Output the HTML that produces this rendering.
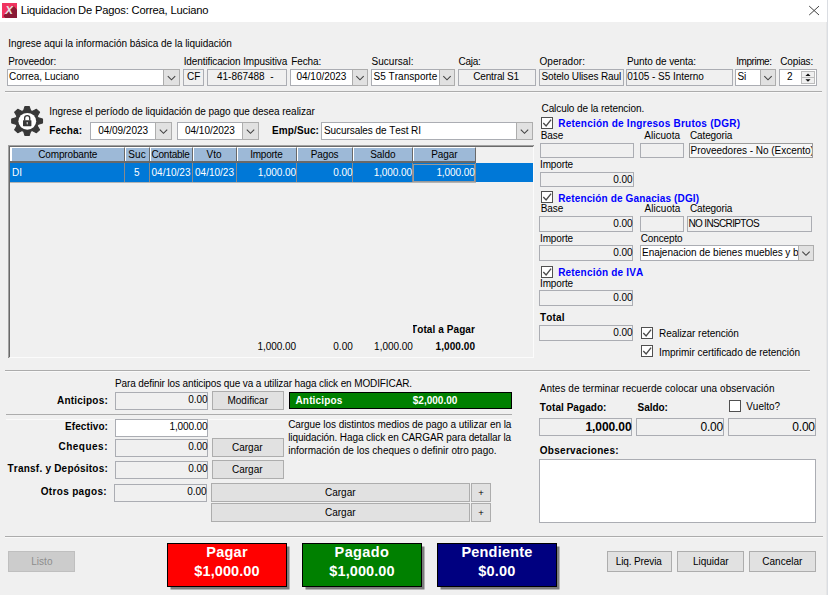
<!DOCTYPE html>
<html lang="es"><head><meta charset="utf-8"><title>Liquidacion De Pagos: Correa, Luciano</title>
<style>
*{box-sizing:border-box;margin:0;padding:0}
html,body{width:828px;height:595px;overflow:hidden;background:#f0f0f0}
body{position:relative;font-family:"Liberation Sans",Arial,sans-serif;font-size:10px;color:#000;line-height:13px;font-kerning:none}
.a{position:absolute;white-space:nowrap}
.t{position:absolute;white-space:nowrap;height:13px;line-height:13px}
.b{font-weight:bold}
.f{position:absolute;border:1px solid #abadb3;background:#f0f0f0}
.w{background:#fff}
.btn{position:absolute;border:1px solid #adadad;background:#e1e1e1}
.dd{position:absolute;border:1px solid #adadad;background:#e1e1e1}
.hl{position:absolute;height:1px;background:#acacac}
.cb{position:absolute;width:12px;height:12px;border:1px solid #505050;background:#fff}
.blue{color:#0000ff;font-weight:bold}
.th{position:absolute;top:0;height:15px;background:#9db9d7;border-right:1px solid #696969;border-left:1px solid #fff;border-top:1px solid #fff}
.vl{position:absolute;top:18px;height:19px;width:1px;background:#8a8a8a}
.big{position:absolute;width:120px;height:44px;border:1px solid #000;box-shadow:3px 3px 0 -0.5px #7d7d7d}
.bt{position:absolute;white-space:nowrap;color:#fff;font-weight:bold;font-size:14.5px;line-height:18px;height:18px}
</style></head>
<body>
<div class="a" style="left:0;top:0;width:828px;height:22px;background:#fff"></div>
<svg class="a" style="left:2px;top:3px" width="15" height="15"><rect width="15" height="15" fill="#f03460"/><polygon points="11.2,2.6 15,6.4 15,15 3.4,15 1.4,13 3,11" fill="#8a1a36"/><text x="7.1" y="11.2" font-family="Liberation Sans" font-weight="bold" font-style="italic" font-size="11.5" fill="#e4e4e4" text-anchor="middle">X</text></svg>
<div class="a" style="left:20.7px;top:3px;font-size:11.2px;line-height:15px;letter-spacing:-0.19px;color:#000">Liquidacion De Pagos: Correa, Luciano</div>
<svg class="a" style="left:808px;top:5px" width="12" height="12"><path d="M1.2 1.1 L11 10 M11 1.1 L1.2 10" stroke="#444" stroke-width="1" fill="none"/></svg>
<div class="a" style="left:826px;top:22px;width:1px;height:573px;background:#e7e7e7"></div>
<div class="a" style="left:827px;top:0;width:1px;height:595px;background:#dadde2"></div>
<div class="t" style="left:8.2px;top:37px;letter-spacing:-0.05px;">Ingrese aqui la información básica de la liquidación</div>
<div class="t" style="left:8.2px;top:55px;letter-spacing:-0.09px;">Proveedor:</div>
<div class="t" style="left:183.7px;top:55px;letter-spacing:-0.11px;">Identificacion Impusitiva</div>
<div class="t" style="left:291.2px;top:55px;letter-spacing:-0.10px;">Fecha:</div>
<div class="t" style="left:371.5px;top:55px;letter-spacing:0.04px;">Sucursal:</div>
<div class="t" style="left:458.5px;top:55px;letter-spacing:-0.27px;">Caja:</div>
<div class="t" style="left:539.5px;top:55px;letter-spacing:0.05px;">Operador:</div>
<div class="t" style="left:627.0px;top:55px;letter-spacing:-0.07px;">Punto de venta:</div>
<div class="t" style="left:736.2px;top:55px;letter-spacing:-0.45px;">Imprime:</div>
<div class="t" style="left:780.3px;top:55px;letter-spacing:-0.17px;">Copias:</div>
<div class="f w" style="left:7px;top:69px;width:173px;height:17px;"></div>
<div class="dd" style="left:163px;top:69px;width:17px;height:17px"><svg width="15" height="15" style="display:block"><path d="M3.8 6.1 l3.7 3.7 l3.7 -3.7" fill="none" stroke="#444" stroke-width="1.1"/></svg></div>
<div class="t" style="left:9.0px;top:70px;letter-spacing:-0.07px;">Correa, Luciano</div>
<div class="f " style="left:183px;top:69px;width:21px;height:17px;"></div>
<div class="t" style="left:187.1px;top:70px;letter-spacing:-0.10px;">CF</div>
<div class="f " style="left:207px;top:69px;width:80px;height:17px;"></div>
<div class="t" style="left:217.0px;top:70px;letter-spacing:-0.02px;">41-867488  -</div>
<div class="f w" style="left:290px;top:69px;width:78px;height:17px;"></div>
<div class="dd" style="left:352px;top:69px;width:16px;height:17px"><svg width="14" height="15" style="display:block"><path d="M3.3 6.1 l3.7 3.7 l3.7 -3.7" fill="none" stroke="#444" stroke-width="1.1"/></svg></div>
<div class="t" style="left:296.5px;top:70px;letter-spacing:-0.02px;">04/10/2023</div>
<div class="f w" style="left:371px;top:69px;width:84px;height:17px;"></div>
<div class="dd" style="left:439px;top:69px;width:16px;height:17px"><svg width="14" height="15" style="display:block"><path d="M3.3 6.1 l3.7 3.7 l3.7 -3.7" fill="none" stroke="#444" stroke-width="1.1"/></svg></div>
<div class="t" style="left:373.5px;top:70px;letter-spacing:0.03px;">S5 Transporte</div>
<div class="f " style="left:458px;top:69px;width:78px;height:17px;"></div>
<div class="t" style="left:473.2px;top:70px;letter-spacing:-0.14px;">Central S1</div>
<div class="f " style="left:539px;top:69px;width:85px;height:17px;"></div>
<div class="t" style="left:541.5px;top:70px;letter-spacing:-0.12px;">Sotelo Ulises Raul</div>
<div class="f " style="left:626px;top:69px;width:107px;height:17px;"></div>
<div class="t" style="left:627.3px;top:70px;letter-spacing:-0.05px;">0105 - S5 Interno</div>
<div class="f w" style="left:735px;top:69px;width:41px;height:17px;"></div>
<div class="dd" style="left:760px;top:69px;width:16px;height:17px"><svg width="14" height="15" style="display:block"><path d="M3.3 6.1 l3.7 3.7 l3.7 -3.7" fill="none" stroke="#444" stroke-width="1.1"/></svg></div>
<div class="t" style="left:737.5px;top:70px;letter-spacing:-0.07px;">Si</div>
<div class="f w" style="left:779px;top:69px;width:38px;height:17px;"></div>
<div class="t" style="left:787.0px;top:70px;letter-spacing:-0.08px;">2</div>
<div class="dd" style="left:801px;top:71px;width:14px;height:13px;background:#f0f0f0;border-color:#bcbcbc"><svg width="12" height="11" style="display:block"><path d="M0 5.5 h12" stroke="#bcbcbc"/><path d="M3.4 4 h5.2 l-2.6 -2.6 z M3.4 7.2 h5.2 l-2.6 2.6 z" fill="#111"/></svg></div>
<div class="hl" style="left:5px;top:91px;width:817px"></div>
<div class="hl" style="left:5px;top:92px;width:817px;background:#f9f9f9"></div>
<svg class="a" style="left:10px;top:104px" width="34" height="34" viewBox="-17.1 -17 34 34"><g transform="scale(1,0.94)"><g fill="#383838" stroke="#383838" stroke-width="1.1" stroke-linejoin="round"><path d="M-3.4 -11.3 L-2.2 -15.4 L2.2 -15.4 L3.4 -11.3 Z" transform="rotate(0)"/><path d="M-3.4 -11.3 L-2.2 -15.4 L2.2 -15.4 L3.4 -11.3 Z" transform="rotate(45)"/><path d="M-3.4 -11.3 L-2.2 -15.4 L2.2 -15.4 L3.4 -11.3 Z" transform="rotate(90)"/><path d="M-3.4 -11.3 L-2.2 -15.4 L2.2 -15.4 L3.4 -11.3 Z" transform="rotate(135)"/><path d="M-3.4 -11.3 L-2.2 -15.4 L2.2 -15.4 L3.4 -11.3 Z" transform="rotate(180)"/><path d="M-3.4 -11.3 L-2.2 -15.4 L2.2 -15.4 L3.4 -11.3 Z" transform="rotate(225)"/><path d="M-3.4 -11.3 L-2.2 -15.4 L2.2 -15.4 L3.4 -11.3 Z" transform="rotate(270)"/><path d="M-3.4 -11.3 L-2.2 -15.4 L2.2 -15.4 L3.4 -11.3 Z" transform="rotate(315)"/><circle r="11.4"/></g><circle r="8.9" cx="0.2" cy="0.3" fill="#fff"/><rect x="-4.1" y="-0.9" width="8.4" height="6.5" rx="0.5" fill="#383838"/><path d="M-2.45 -0.6 v-2.6 a2.55 2.55 0 0 1 5.1 0 v2.6" fill="none" stroke="#383838" stroke-width="1.35"/><rect x="-0.35" y="1.1" width="0.9" height="2.6" rx="0.4" fill="#fff"/></g></svg>
<div class="t" style="left:49.2px;top:105px;letter-spacing:-0.05px;">Ingrese el período de liquidación de pago que desea realizar</div>
<div class="t b" style="left:49.2px;top:124px;letter-spacing:0.13px;">Fecha:</div>
<div class="f w" style="left:90px;top:122px;width:82px;height:18px;"></div>
<div class="dd" style="left:155px;top:122px;width:17px;height:18px"><svg width="15" height="16" style="display:block"><path d="M3.8 6.6 l3.7 3.7 l3.7 -3.7" fill="none" stroke="#444" stroke-width="1.1"/></svg></div>
<div class="t" style="left:98.2px;top:124px;letter-spacing:-0.02px;">04/09/2023</div>
<div class="f w" style="left:177px;top:122px;width:82px;height:18px;"></div>
<div class="dd" style="left:242px;top:122px;width:17px;height:18px"><svg width="15" height="16" style="display:block"><path d="M3.8 6.6 l3.7 3.7 l3.7 -3.7" fill="none" stroke="#444" stroke-width="1.1"/></svg></div>
<div class="t" style="left:185.0px;top:124px;letter-spacing:-0.02px;">04/10/2023</div>
<div class="t b" style="left:272.0px;top:124px;letter-spacing:0.11px;">Emp/Suc:</div>
<div class="f w" style="left:321px;top:122px;width:212px;height:18px;"></div>
<div class="dd" style="left:516px;top:122px;width:17px;height:18px"><svg width="15" height="16" style="display:block"><path d="M3.8 6.6 l3.7 3.7 l3.7 -3.7" fill="none" stroke="#444" stroke-width="1.1"/></svg></div>
<div class="t" style="left:324.0px;top:124px;letter-spacing:-0.07px;">Sucursales de Test RI</div>
<div class="a" style="left:8px;top:145px;width:526px;height:213px;border-top:2px solid #6a6a6a;border-left:2px solid #696969;border-right:1px solid #fbfbfb;border-bottom:1px solid #fbfbfb">
<div class="a" style="left:-2px;top:-2px;width:525px;height:1px;background:#a2a2a2"></div>
<div class="a" style="left:-2px;top:-2px;width:1px;height:212px;background:#a2a2a2"></div>
<div class="th" style="left:0px;width:115px;height:14px;border-left-width:2px"></div>
<div class="th" style="left:115px;width:25px;height:14px"></div>
<div class="th" style="left:140px;width:43px;height:14px"></div>
<div class="th" style="left:183px;width:44px;height:14px"></div>
<div class="th" style="left:227px;width:60px;height:14px"></div>
<div class="th" style="left:287px;width:56px;height:14px"></div>
<div class="th" style="left:343px;width:60px;height:14px"></div>
<div class="th" style="left:403px;width:63px;height:14px"></div>
<div class="a" style="left:0;top:14px;width:466px;height:2px;background:#696969"></div>
<div class="a" style="left:0;top:16px;width:523px;height:19px;background:#0078d7"></div>
<div class="vl" style="left:114px;top:16px"></div>
<div class="vl" style="left:139px;top:16px"></div>
<div class="vl" style="left:182px;top:16px"></div>
<div class="vl" style="left:226px;top:16px"></div>
<div class="vl" style="left:286px;top:16px"></div>
<div class="vl" style="left:342px;top:16px"></div>
<div class="vl" style="left:402px;top:16px"></div>
<div class="vl" style="left:465px;top:16px"></div>
<div class="a" style="left:0;top:35px;width:466px;height:1px;background:#b4b4b4"></div>
<div class="a" style="left:403px;top:17px;width:62px;height:18px;border:1px solid #9a9a9a"></div>
</div>
<div class="t" style="left:38.2px;top:148px;letter-spacing:-0.14px;">Comprobante</div>
<div class="t" style="left:128.2px;top:148px;letter-spacing:0.19px;">Suc</div>
<div class="t" style="left:151.5px;top:148px;letter-spacing:-0.23px;">Contable</div>
<div class="t" style="left:206.5px;top:148px;letter-spacing:0.06px;">Vto</div>
<div class="t" style="left:250.2px;top:148px;letter-spacing:-0.23px;">Importe</div>
<div class="t" style="left:310.7px;top:148px;letter-spacing:-0.11px;">Pagos</div>
<div class="t" style="left:370.2px;top:148px;letter-spacing:-0.06px;">Saldo</div>
<div class="t" style="left:431.2px;top:148px;letter-spacing:-0.08px;">Pagar</div>
<div class="t" style="left:12.0px;top:166px;letter-spacing:-0.08px;color:#fff">DI</div>
<div class="t" style="left:134.0px;top:166px;letter-spacing:-0.08px;color:#fff">5</div>
<div class="t" style="left:151.5px;top:166px;letter-spacing:0.01px;color:#fff">04/10/23</div>
<div class="t" style="left:195.0px;top:166px;letter-spacing:0.01px;color:#fff">04/10/23</div>
<div class="t" style="left:257.7px;top:166px;letter-spacing:-0.08px;color:#fff">1,000.00</div>
<div class="t" style="left:333.2px;top:166px;letter-spacing:-0.04px;color:#fff">0.00</div>
<div class="t" style="left:373.7px;top:166px;letter-spacing:-0.08px;color:#fff">1,000.00</div>
<div class="t" style="left:436.4px;top:166px;letter-spacing:-0.08px;color:#fff">1,000.00</div>
<div class="a" style="left:413px;top:320px;width:64px;height:16px;overflow:hidden">
<div class="t b" style="right:2px;top:3px;letter-spacing:0.09px">Total a Pagar</div></div>
<div class="t" style="left:257.5px;top:340px;letter-spacing:-0.05px;">1,000.00</div>
<div class="t" style="left:333.2px;top:340px;letter-spacing:0.08px;">0.00</div>
<div class="t" style="left:374.1px;top:340px;letter-spacing:-0.02px;">1,000.00</div>
<div class="t b" style="left:435.5px;top:340px;letter-spacing:0.08px;">1,000.00</div>
<div class="t" style="left:541.5px;top:102px;letter-spacing:-0.08px;">Calculo de la retencion.</div>
<div class="cb" style="left:541px;top:117px"><svg width="10" height="10" style="display:block"><path d="M1.3 5 l2.8 2.9 l5 -6.2" fill="none" stroke="#4a4a4a" stroke-width="1.35"/></svg></div>
<div class="t b blue" style="left:558.2px;top:117px;letter-spacing:0.24px;">Retención de Ingresos Brutos (DGR)</div>
<div class="t" style="left:540.7px;top:129px;letter-spacing:-0.09px;">Base</div>
<div class="t" style="left:644.2px;top:129px;letter-spacing:0.05px;">Alicuota</div>
<div class="t" style="left:690.0px;top:129px;letter-spacing:-0.13px;">Categoria</div>
<div class="f " style="left:540px;top:143px;width:94px;height:15px;"></div>
<div class="f " style="left:640px;top:143px;width:44px;height:15px;"></div>
<div class="f " style="left:689px;top:143px;width:124px;height:15px;background:#f7f7f7;border-color:#9c9c9c"></div>
<div class="a" style="left:690px;top:144px;width:122px;height:13px;overflow:hidden">
<div class="t" style="left:0.5px;top:0px;letter-spacing:-0.02px">Proveedores - No (Excento)</div></div>
<div class="t" style="left:540.0px;top:158px;letter-spacing:-0.13px;">Importe</div>
<div class="f " style="left:540px;top:172px;width:94px;height:15px;"></div>
<div class="t" style="left:613.2px;top:173px;letter-spacing:-0.04px;">0.00</div>
<div class="cb" style="left:541px;top:191px"><svg width="10" height="10" style="display:block"><path d="M1.3 5 l2.8 2.9 l5 -6.2" fill="none" stroke="#4a4a4a" stroke-width="1.35"/></svg></div>
<div class="t b blue" style="left:558.2px;top:192px;letter-spacing:0.14px;">Retención de Ganacias (DGI)</div>
<div class="t" style="left:540.7px;top:202px;letter-spacing:-0.09px;">Base</div>
<div class="t" style="left:644.5px;top:202px;letter-spacing:0.05px;">Alicuota</div>
<div class="t" style="left:690.0px;top:202px;letter-spacing:-0.13px;">Categoria</div>
<div class="f " style="left:539px;top:216px;width:94px;height:16px;"></div>
<div class="t" style="left:613.2px;top:217px;letter-spacing:-0.04px;">0.00</div>
<div class="f " style="left:640px;top:216px;width:44px;height:16px;"></div>
<div class="f " style="left:687px;top:216px;width:125px;height:16px;"></div>
<div class="t" style="left:688.5px;top:217px;letter-spacing:-0.65px;">NO INSCRIPTOS</div>
<div class="t" style="left:540.0px;top:232px;letter-spacing:-0.13px;">Importe</div>
<div class="t" style="left:640.7px;top:232px;letter-spacing:-0.13px;">Concepto</div>
<div class="f " style="left:539px;top:245px;width:94px;height:16px;"></div>
<div class="t" style="left:613.2px;top:246px;letter-spacing:-0.04px;">0.00</div>
<div class="f w" style="left:640px;top:245px;width:174px;height:16px;"></div>
<div class="dd" style="left:798px;top:245px;width:16px;height:16px"><svg width="14" height="14" style="display:block"><path d="M3.3 5.6 l3.7 3.7 l3.7 -3.7" fill="none" stroke="#444" stroke-width="1.1"/></svg></div>
<div class="a" style="left:641px;top:246px;width:157px;height:14px;overflow:hidden">
<div class="t" style="left:1px;top:0px;letter-spacing:-0.04px">Enajenacion de bienes muebles y bienes</div></div>
<div class="cb" style="left:541px;top:266px"><svg width="10" height="10" style="display:block"><path d="M1.3 5 l2.8 2.9 l5 -6.2" fill="none" stroke="#4a4a4a" stroke-width="1.35"/></svg></div>
<div class="t b blue" style="left:558.2px;top:266px;letter-spacing:0.19px;">Retención de IVA</div>
<div class="t" style="left:540.0px;top:277px;letter-spacing:-0.13px;">Importe</div>
<div class="f " style="left:539px;top:290px;width:94px;height:16px;"></div>
<div class="t" style="left:613.2px;top:291px;letter-spacing:-0.04px;">0.00</div>
<div class="t b" style="left:540.0px;top:311px;letter-spacing:0.16px;">Total</div>
<div class="f " style="left:539px;top:325px;width:94px;height:16px;"></div>
<div class="t" style="left:613.2px;top:326px;letter-spacing:-0.04px;">0.00</div>
<div class="cb" style="left:641px;top:327px"><svg width="10" height="10" style="display:block"><path d="M1.3 5 l2.8 2.9 l5 -6.2" fill="none" stroke="#4a4a4a" stroke-width="1.35"/></svg></div>
<div class="t" style="left:659.0px;top:327px;letter-spacing:-0.04px;">Realizar retención</div>
<div class="cb" style="left:641px;top:345px"><svg width="10" height="10" style="display:block"><path d="M1.3 5 l2.8 2.9 l5 -6.2" fill="none" stroke="#4a4a4a" stroke-width="1.35"/></svg></div>
<div class="t" style="left:659.0px;top:346px;letter-spacing:-0.04px;">Imprimir certificado de retención</div>
<div class="hl" style="left:5px;top:370px;width:805px"></div>
<div class="hl" style="left:5px;top:371px;width:805px;background:#f9f9f9"></div>
<div class="t" style="left:115.0px;top:377px;letter-spacing:-0.11px;">Para definir los anticipos que va a utilizar haga click en MODIFICAR.</div>
<div class="t b" style="left:57.0px;top:394px;letter-spacing:0.21px;">Anticipos:</div>
<div class="f " style="left:115px;top:392px;width:93px;height:18px;"></div>
<div class="t" style="left:188.2px;top:393px;letter-spacing:-0.04px;">0.00</div>
<div class="btn" style="left:212px;top:391px;width:72px;height:19px;"></div>
<div class="t" style="left:227.5px;top:394px;letter-spacing:-0.01px;">Modificar</div>
<div class="a" style="left:289px;top:392px;width:223px;height:17px;background:#008000;border:1px solid #000"></div>
<div class="t b" style="left:295.5px;top:394px;letter-spacing:0.15px;color:#fff">Anticipos</div>
<div class="t b" style="left:412.8px;top:394px;letter-spacing:0.01px;color:#fff">$2,000.00</div>
<div class="hl" style="left:6px;top:414px;width:506px"></div>
<div class="hl" style="left:6px;top:419px;width:109px;background:#fafafa"></div><div class="hl" style="left:208px;top:419px;width:304px;background:#fafafa"></div>
<div class="t b" style="left:65.0px;top:420px;letter-spacing:0.09px;">Efectivo:</div>
<div class="f w" style="left:115px;top:419px;width:93px;height:18px;"></div>
<div class="t" style="left:169.5px;top:420px;letter-spacing:-0.12px;">1,000.00</div>
<div class="t b" style="left:58.5px;top:440px;letter-spacing:0.49px;">Cheques:</div>
<div class="f " style="left:115px;top:439px;width:93px;height:18px;"></div>
<div class="t" style="left:188.2px;top:440px;letter-spacing:-0.04px;">0.00</div>
<div class="btn" style="left:212px;top:438px;width:72px;height:19px;"></div>
<div class="t" style="left:232.0px;top:441px;letter-spacing:-0.01px;">Cargar</div>
<div class="t b" style="left:7.5px;top:462px;letter-spacing:0.22px;">Transf. y Depósitos:</div>
<div class="f " style="left:115px;top:461px;width:93px;height:18px;"></div>
<div class="t" style="left:188.2px;top:462px;letter-spacing:-0.04px;">0.00</div>
<div class="btn" style="left:212px;top:460px;width:72px;height:19px;"></div>
<div class="t" style="left:232.0px;top:463px;letter-spacing:-0.01px;">Cargar</div>
<div class="t b" style="left:40.7px;top:485px;letter-spacing:0.34px;">Otros pagos:</div>
<div class="f " style="left:114px;top:484px;width:93px;height:18px;"></div>
<div class="t" style="left:187.2px;top:485px;letter-spacing:-0.04px;">0.00</div>
<div class="btn" style="left:211px;top:483px;width:259px;height:19px;"></div>
<div class="t" style="left:325.0px;top:486px;letter-spacing:-0.01px;">Cargar</div>
<div class="btn" style="left:471px;top:483px;width:20px;height:19px;"></div>
<div class="t" style="left:478.3px;top:486px;letter-spacing:-0.08px;font-size:9.5px;line-height:13px;height:13px;">+</div>
<div class="btn" style="left:211px;top:503px;width:259px;height:19px;"></div>
<div class="t" style="left:325.0px;top:506px;letter-spacing:-0.01px;">Cargar</div>
<div class="btn" style="left:471px;top:503px;width:20px;height:19px;"></div>
<div class="t" style="left:478.3px;top:506px;letter-spacing:-0.08px;font-size:9.5px;line-height:13px;height:13px;">+</div>
<div class="t" style="left:288.2px;top:418px;letter-spacing:-0.06px;">Cargue los distintos medios de pago a utilizar en la</div>
<div class="t" style="left:288.2px;top:431px;letter-spacing:-0.09px;">liquidación. Haga click en CARGAR para detallar la</div>
<div class="t" style="left:288.2px;top:444px;letter-spacing:0.01px;">información de los cheques o definir otro pago.</div>
<div class="t" style="left:539.7px;top:382px;letter-spacing:0.05px;">Antes de terminar recuerde colocar una observación</div>
<div class="t b" style="left:539.7px;top:401px;letter-spacing:0.05px;">Total Pagado:</div>
<div class="t b" style="left:637.5px;top:401px;letter-spacing:-0.03px;">Saldo:</div>
<div class="cb" style="left:729px;top:400px"></div>
<div class="t" style="left:746.2px;top:400px;letter-spacing:0.01px;">Vuelto?</div>
<div class="f " style="left:539px;top:418px;width:93px;height:18px;"></div>
<div class="t b" style="left:585.5px;top:419px;letter-spacing:-0.09px;font-size:12px;line-height:16px;height:16px;">1,000.00</div>
<div class="f " style="left:636px;top:418px;width:88px;height:18px;"></div>
<div class="t" style="left:700.5px;top:419px;letter-spacing:-0.21px;font-size:12px;line-height:16px;height:16px;">0.00</div>
<div class="f " style="left:728px;top:418px;width:88px;height:18px;"></div>
<div class="t" style="left:792.3px;top:419px;letter-spacing:-0.21px;font-size:12px;line-height:16px;height:16px;">0.00</div>
<div class="t b" style="left:539.7px;top:444px;letter-spacing:0.30px;">Observaciones:</div>
<div class="f w" style="left:539px;top:459px;width:277px;height:64px;"></div>
<div class="hl" style="left:5px;top:536px;width:818px"></div>
<div class="hl" style="left:5px;top:537px;width:818px;background:#f9f9f9"></div>
<div class="btn" style="left:8px;top:551px;width:67px;height:21px;background:#cccccc;border-color:#bfbfbf"></div>
<div class="t" style="left:31.2px;top:555px;letter-spacing:0.04px;color:#8c8c8c">Listo</div>
<div class="big" style="left:167px;top:543px;background:#ff0000"></div>
<div class="bt" style="left:206.2px;top:543px;letter-spacing:0.28px">Pagar</div>
<div class="bt" style="left:194.3px;top:562px;letter-spacing:0.10px">$1,000.00</div>
<div class="big" style="left:302px;top:543px;background:#008000"></div>
<div class="bt" style="left:334.6px;top:543px;letter-spacing:0.39px">Pagado</div>
<div class="bt" style="left:329.3px;top:562px;letter-spacing:0.10px">$1,000.00</div>
<div class="big" style="left:437px;top:543px;background:#000080"></div>
<div class="bt" style="left:461.4px;top:543px;letter-spacing:0.21px">Pendiente</div>
<div class="bt" style="left:478.2px;top:562px;letter-spacing:0.24px">$0.00</div>
<div class="btn" style="left:607px;top:551px;width:65px;height:21px;"></div>
<div class="t" style="left:615.7px;top:555px;letter-spacing:-0.11px;">Liq. Previa</div>
<div class="btn" style="left:677px;top:551px;width:67px;height:21px;"></div>
<div class="t" style="left:693.0px;top:555px;letter-spacing:-0.01px;">Liquidar</div>
<div class="btn" style="left:749px;top:551px;width:67px;height:21px;"></div>
<div class="t" style="left:762.3px;top:555px;letter-spacing:-0.00px;">Cancelar</div>
</body></html>
